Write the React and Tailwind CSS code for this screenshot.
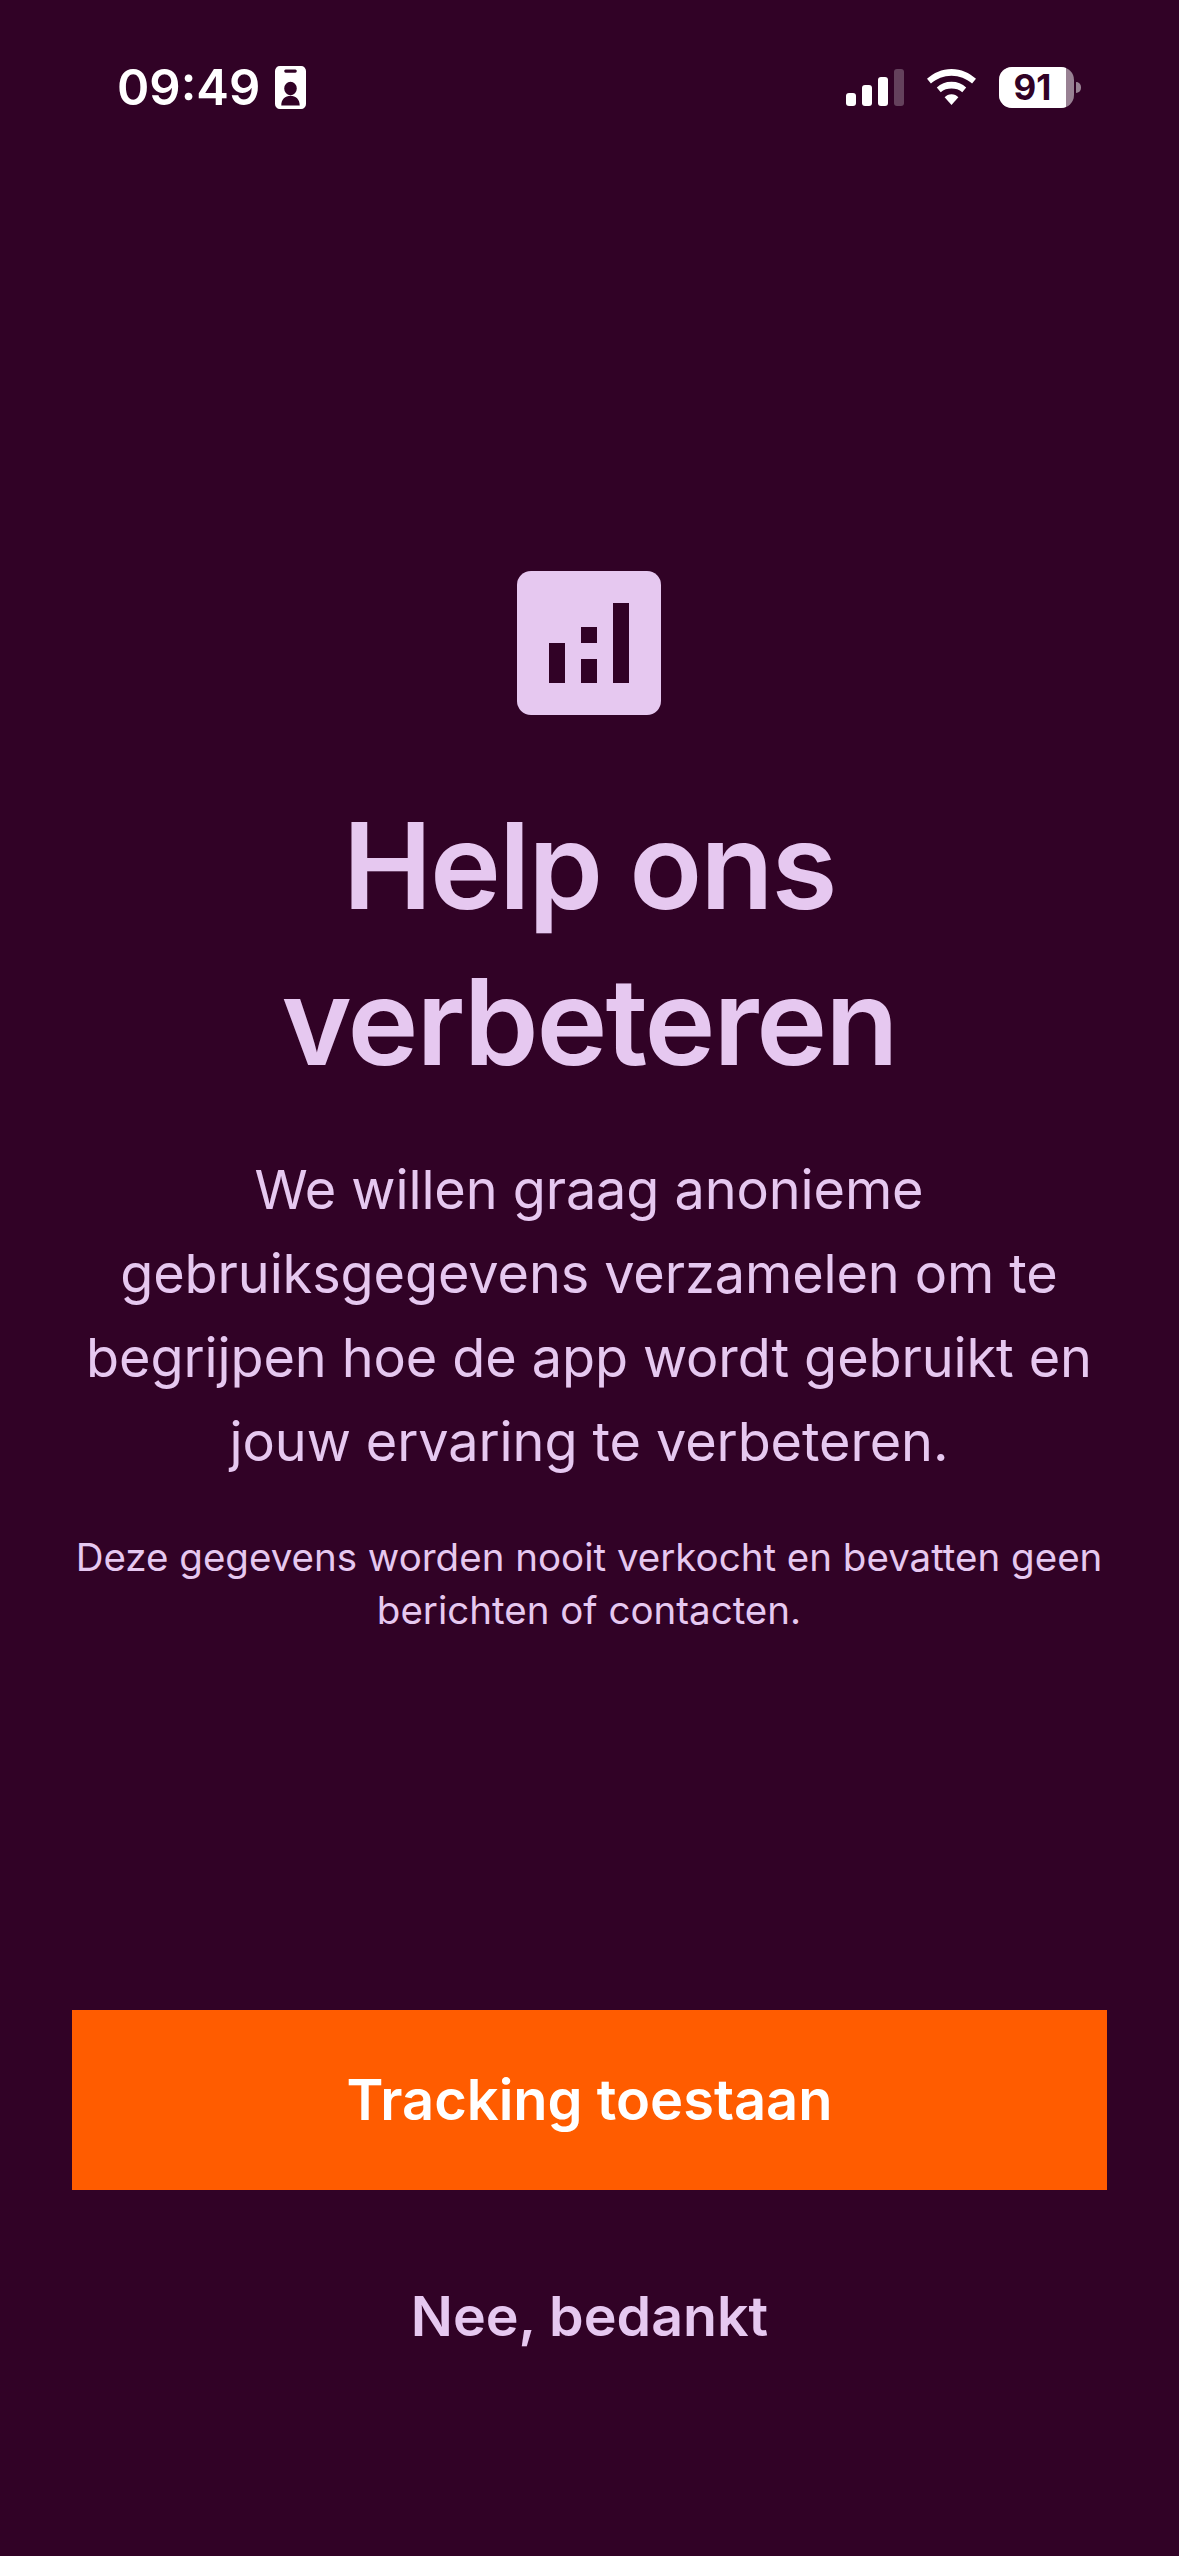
const BG = "#310226";

const StatusBar = () => (
	<div className="flex items-center justify-between pl-[117px] pr-[98px] pt-[66px] pb-[67px]">
		<div className="flex h-[43px] items-center gap-[15px]">
			<span className="font-['Inter',sans-serif] text-[49px] leading-[54px] font-semibold text-white">09:49</span>
			<svg width="31" height="43" viewBox="0 0 32 42" preserveAspectRatio="none">
				<path fillRule="evenodd" fill="#fff" d="M5 0h22a5 5 0 0 1 5 5v32a5 5 0 0 1-5 5H5a5 5 0 0 1-5-5V5a5 5 0 0 1 5-5zM11 3.500a1.500 1.500 0 0 0 0 3h10a1.500 1.500 0 0 0 0-3zM16 15.500a6.500 6.500 0 1 0 0 13 6.500 6.500 0 0 0 0-13zM6.500 38.500h19c0-6-4-9.500-9.500-9.500s-9.500 3.500-9.500 9.500z" />
			</svg>
		</div>
		<div className="flex h-[43px] items-center gap-[23px]">
			<svg width="58" height="37" viewBox="0 0 58 37">
				<rect x="0" y="24" width="10" height="13" rx="3" fill="#fff" />
				<rect x="16" y="16" width="10" height="21" rx="3" fill="#fff" />
				<rect x="32" y="8" width="10" height="29" rx="3" fill="#fff" />
				<rect x="48" y="0" width="10" height="37" rx="3" fill="#fff" fillOpacity="0.25" />
			</svg>
			<svg width="49" height="37" viewBox="0 0 50 38" preserveAspectRatio="none">
				<path fill="#fff" d="M25 0c10 0 18 4 25 10l-4 5c-6-5-13-8-21-8S10 10 4 15l-4-5C7 4 15 0 25 0z" />
				<path fill="#fff" d="M25 13c6 0 11 2 15 6l-4 5c-3-3-7-4-11-4s-8 1-11 4l-4-5c4-4 9-6 15-6z" />
				<path fill="#fff" d="M25 26c3 0 5 1 7 3l-7 8-7-8c2-2 4-3 7-3z" />
			</svg>
			<div className="flex items-center gap-[2px]">
				<div className="flex h-[41px] w-[75px] items-center overflow-hidden rounded-[13px] bg-white/50">
					<div className="flex h-full w-[67px] items-center justify-center bg-white">
						<span className="font-['Inter',sans-serif] text-[35px] leading-none font-bold text-[#310226]">91</span>
					</div>
				</div>
				<div className="h-[11px] w-[5px] rounded-r-full bg-white/50" />
			</div>
		</div>
	</div>
);

const AnalyticsIcon = () => (
	<svg width="144" height="144" viewBox="0 0 144 144" className="shrink-0">
		<rect width="144" height="144" rx="14" fill="#e6c8f0" />
		<path fill={BG} d="M32 72h16v40H32zM64 56h16v16H64zM64 88h16v24H64zM96 32h16v80H96z" />
	</svg>
);

export default function App() {
	return (
		<div className="flex h-[2556px] w-[1179px] flex-col overflow-hidden bg-[#310226] font-['Inter',sans-serif] text-[#e6c8f0]">
			<StatusBar />
			<div className="flex flex-col items-center pt-[395px] pr-px">
				<AnalyticsIcon />
				<h1 className="mt-[73px] w-[800px] text-center text-[120px] leading-[156px] font-semibold tracking-[-2.1px]">
					Help ons verbeteren
				</h1>
				<p className="mt-[48px] w-[1040px] text-center text-[54px] leading-[84px] tracking-[-0.1px]">
					We willen graag anonieme gebruiksgegevens verzamelen om te begrijpen hoe de app wordt gebruikt en jouw ervaring te verbeteren.
				</p>
				<p className="mt-[47px] w-[1060px] text-center text-[38.5px] leading-[53px]">
					Deze gegevens worden nooit verkocht en bevatten geen berichten of contacten.
				</p>
			</div>
			<div className="mt-auto flex flex-col items-center pl-[72px] pr-[72px] pb-[204px]">
				<button className="flex h-[180px] w-full items-center justify-center bg-[#ff5c00] text-[56px] font-semibold text-white">
					Tracking toestaan
				</button>
				<button className="mt-[90px] text-[55.5px] leading-[72px] font-semibold">Nee, bedankt</button>
			</div>
		</div>
	);
}
